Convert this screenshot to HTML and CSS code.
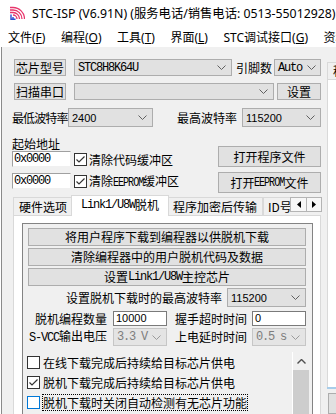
FILE: index.html
```html
<!DOCTYPE html>
<html lang="zh-CN">
<head>
  <meta charset="UTF-8" />
  <meta name="viewport" content="width=device-width, initial-scale=1.0" />
  <title>STC-ISP</title>
  <link rel="stylesheet" href="styles.css">
</head>
<body>
  <div class="window">
    <div class="titlebar">
      <svg class="app-icon" viewBox="0 0 15 14">
        <g class="icon-red">
          <path d="M0 1.5H3A11.5 11.5 0 0 1 14.5 13" />
          <path d="M0 4H3A9 9 0 0 1 12 13" />
          <path d="M0 6.5H3A6.5 6.5 0 0 1 9.5 13" />
          <path d="M3 9A4 4 0 0 1 7 13" />
        </g>
        <path class="icon-blue" d="M1 8.5V13.2H5.5M3 11V13" />
      </svg>
      <span class="title">STC-ISP (V6.91N) (服务电话/销售电话: 0513-55012928)</span>
    </div>

    <div class="menubar">
      <span>文件(<u>F</u>)</span>
      <span>编程(<u>O</u>)</span>
      <span>工具(<u>T</u>)</span>
      <span>界面(<u>L</u>)</span>
      <span>STC调试接口(<u>G</u>)</span>
      <span>资料</span>
    </div>

    <div class="client">
      <div class="left-pane">
        <div class="row row-chip">
          <div class="btn btn-side">芯片型号</div>
          <div class="combo combo-chip">
            <span class="mono">STC8H8K64U</span>
            <svg class="chev" viewBox="0 0 9 5"><path d="M0.5 0.5L4.5 4.5L8.5 0.5" /></svg>
          </div>
          <span class="lbl lbl-pins">引脚数</span>
          <div class="combo combo-pins">
            <span class="mono">Auto</span>
            <svg class="chev" viewBox="0 0 9 5"><path d="M0.5 0.5L4.5 4.5L8.5 0.5" /></svg>
          </div>
        </div>

        <div class="row row-port">
          <div class="btn btn-side">扫描串口</div>
          <div class="combo combo-port">
            <span></span>
            <svg class="chev" viewBox="0 0 9 5"><path d="M0.5 0.5L4.5 4.5L8.5 0.5" /></svg>
          </div>
          <div class="btn btn-setup">设置</div>
        </div>

        <div class="row row-baud">
          <span class="lbl lbl-minbaud">最低波特率</span>
          <div class="combo combo-minbaud">
            <span class="num">2400</span>
            <svg class="chev" viewBox="0 0 9 5"><path d="M0.5 0.5L4.5 4.5L8.5 0.5" /></svg>
          </div>
          <span class="lbl lbl-maxbaud">最高波特率</span>
          <div class="combo combo-maxbaud">
            <span class="num">115200</span>
            <svg class="chev" viewBox="0 0 9 5"><path d="M0.5 0.5L4.5 4.5L8.5 0.5" /></svg>
          </div>
        </div>

        <div class="addr-block">
          <div class="addr-left">
            <div class="addr-title">起始地址</div>
            <div class="addr-row">
              <div class="edit edit-addr"><span class="mono">0x0000</span></div>
              <span class="cb"><svg viewBox="0 0 11 11"><path d="M1.5 5.5L4 8L9.5 2.5" /></svg></span>
              <span class="cb-text">清除代码缓冲区</span>
            </div>
            <div class="addr-row">
              <div class="edit edit-addr"><span class="mono">0x0000</span></div>
              <span class="cb"><svg viewBox="0 0 11 11"><path d="M1.5 5.5L4 8L9.5 2.5" /></svg></span>
              <span class="cb-text">清除<span class="mono narrow">EEPROM</span>缓冲区</span>
            </div>
          </div>
          <div class="addr-right">
            <div class="btn btn-file">打开程序文件</div>
            <div class="btn btn-file">打开<span class="mono narrow">EEPROM</span>文件</div>
          </div>
        </div>

        <div class="tab-strip">
          <div class="tab tab-hw">硬件选项</div>
          <div class="tab tab-active"><span class="mono">Link1/U8W</span>脱机</div>
          <div class="tab tab-enc">程序加密后传输</div>
          <div class="tab tab-id">ID号</div>
          <div class="tab-spin">
            <span class="spin-btn"><svg viewBox="0 0 4 7"><path d="M4 0V7L0 3.5Z" /></svg></span>
            <span class="spin-btn"><svg viewBox="0 0 4 7"><path d="M0 0V7L4 3.5Z" /></svg></span>
          </div>
        </div>

        <div class="tab-panel">
          <div class="offline-group">
            <div class="btn dl-btn">将用户程序下载到编程器以供脱机下载</div>
            <div class="btn dl-btn">清除编程器中的用户脱机代码及数据</div>
            <div class="btn dl-btn">设置<span class="mono">Link1/U8W</span>主控芯片</div>

            <div class="baud-row">
              <span class="lbl">设置脱机下载时的最高波特率</span>
              <div class="combo combo-offbaud">
                <span class="num">115200</span>
                <svg class="chev" viewBox="0 0 9 5"><path d="M0.5 0.5L4.5 4.5L8.5 0.5" /></svg>
              </div>
            </div>

            <div class="param-row row-count">
              <span class="plbl plbl-a">脱机编程数量</span>
              <div class="edit field field-a"><span class="num">10000</span></div>
              <span class="plbl plbl-b">握手超时时间</span>
              <div class="edit field"><span class="num">0</span></div>
            </div>

            <div class="param-row row-vcc">
              <span class="plbl plbl-a"><span class="mono">S-VCC</span>输出电压</span>
              <div class="combo combo-off field field-a">
                <span class="mono">3.3 V</span>
                <svg class="chev" viewBox="0 0 9 5"><path d="M0.5 0.5L4.5 4.5L8.5 0.5" /></svg>
              </div>
              <span class="plbl plbl-b">上电延时时间</span>
              <div class="combo combo-off field">
                <span class="mono">0.5 s</span>
                <svg class="chev" viewBox="0 0 9 5"><path d="M0.5 0.5L4.5 4.5L8.5 0.5" /></svg>
              </div>
            </div>

            <div class="opt-list">
              <div class="opt-items">
                <div class="opt">
                  <span class="cb"></span>
                  <span class="opt-text">在线下载完成后持续给目标芯片供电</span>
                </div>
                <div class="opt">
                  <span class="cb"><svg viewBox="0 0 11 11"><path d="M1.5 5.5L4 8L9.5 2.5" /></svg></span>
                  <span class="opt-text">脱机下载完成后持续给目标芯片供电</span>
                </div>
                <div class="opt">
                  <span class="cb cb-hover"></span>
                  <span class="opt-text opt-focus">脱机下载时关闭自动检测有无芯片功能</span>
                </div>
              </div>
              <div class="scrollbar">
                <span class="sb-up"><svg viewBox="0 0 9 5"><path d="M0.5 4.5L4.5 0.5L8.5 4.5" /></svg></span>
                <span class="sb-thumb"></span>
              </div>
            </div>
          </div>
        </div>
      </div>

      <div class="side">
        <div class="side-tab">程序</div>
        <div class="side-panel"></div>
        <div class="side-line"></div>
        <div class="side-box"></div>
      </div>
    </div>
  </div>
</body>
</html>
```

FILE: styles.css
```css
* {
  box-sizing: border-box;
}

body {
  margin: 0;
  width: 336px;
  height: 414px;
  overflow: hidden;
  background-color: #ffffff;
  color: #000000;
  font-family: "Noto Sans CJK SC", sans-serif;
  font-size: 12px;
}

.window {
  width: 336px;
  height: 414px;
  display: flex;
  flex-direction: column;
}

/* title + menu */
.titlebar {
  height: 26px;
  flex: none;
  display: flex;
  align-items: center;
  padding-left: 10px;
  white-space: nowrap;
  font-family: "Noto Sans", "Noto Sans CJK SC", sans-serif;
  font-size: 12.3px;
}

.app-icon {
  width: 15px;
  height: 14px;
  margin-right: 7px;
  flex: none;
}

.icon-red path {
  fill: none;
  stroke: #e8366c;
  stroke-width: 1.3;
}

.icon-blue {
  fill: none;
  stroke: #2d4fd0;
  stroke-width: 1.4;
}

.menubar {
  height: 21px;
  flex: none;
  display: flex;
  align-items: center;
  gap: 15.5px;
  padding-left: 8px;
  white-space: nowrap;
  font-family: "Noto Sans", "Noto Sans CJK SC", sans-serif;
  font-size: 12px;
}

.menubar u {
  text-underline-offset: 1px;
}

/* dialog client area */
.client {
  flex: 1;
  min-height: 0;
  display: flex;
  margin-left: 1px;
  border-left: 1px solid #8a8a8a;
  background-color: #f0f0f0;
  padding-top: 12px;
  overflow: hidden;
}

.left-pane {
  width: 325px;
  flex: none;
  padding-left: 10px;
}

.row {
  display: flex;
  align-items: center;
}

.lbl {
  white-space: nowrap;
  line-height: 16px;
}

.mono {
  font-family: "Liberation Mono", monospace;
  font-size: 12px;
  letter-spacing: -1.2px;
}

.mono.narrow {
  display: inline-block;
  transform: scaleX(0.84);
  transform-origin: left center;
  margin-right: -6px;
}

.num {
  font-family: "Liberation Sans", sans-serif;
  font-size: 11px;
}

.btn {
  display: flex;
  align-items: center;
  justify-content: center;
  background-color: #e1e1e1;
  border: 1px solid #adadad;
  white-space: nowrap;
  line-height: 14px;
}

.combo {
  display: flex;
  align-items: center;
  justify-content: space-between;
  background-color: #e1e1e1;
  border: 1px solid #adadad;
  padding: 0 5px 0 3px;
  white-space: nowrap;
  line-height: 14px;
}

.chev {
  width: 9px;
  height: 5px;
  flex: none;
  fill: none;
  stroke: #606060;
  stroke-width: 1;
}

.edit {
  display: flex;
  align-items: center;
  background-color: #ffffff;
  border: 1px solid #7a7a7a;
  padding-left: 2px;
  line-height: 13px;
}

.cb {
  width: 13px;
  height: 13px;
  flex: none;
  display: flex;
  align-items: center;
  justify-content: center;
  background-color: #ffffff;
  border: 1px solid #333333;
}

.cb svg {
  width: 11px;
  height: 11px;
  fill: none;
  stroke: #333333;
  stroke-width: 1.2;
}

.cb-hover {
  border-color: #0078d7;
}

/* top rows */
.row-chip {
  height: 17px;
}

.btn-side {
  width: 52px;
  height: 17px;
  margin-left: 2px;
}

.combo-chip {
  width: 158px;
  height: 17px;
  margin-left: 8px;
}

.lbl-pins {
  width: 38px;
  margin-left: 4px;
}

.combo-pins {
  width: 47px;
  height: 17px;
  padding-right: 4px;
}

.row-port {
  height: 17px;
  margin-top: 7px;
}

.combo-port {
  width: 200px;
  height: 17px;
  margin-left: 8px;
}

.btn-setup {
  width: 44px;
  height: 17px;
  margin-left: 3px;
}

.row-baud {
  height: 19px;
  margin-top: 8px;
}

.lbl-minbaud {
  width: 56px;
  letter-spacing: -0.9px;
}

.combo-minbaud {
  width: 85px;
  height: 19px;
}

.lbl-maxbaud {
  width: 65px;
  margin-left: 24px;
}

.combo-maxbaud {
  width: 79px;
  height: 19px;
}

/* start address block */
.addr-block {
  display: flex;
  margin-top: 9px;
}

.addr-left {
  width: 206px;
}

.addr-title {
  height: 15px;
  line-height: 15px;
}

.addr-row {
  display: flex;
  align-items: center;
  height: 16px;
}

.addr-row + .addr-row {
  margin-top: 6px;
}

.edit-addr {
  width: 59px;
  height: 16px;
  padding-left: 1px;
  border-color: #a0a0a0 #f0f0f0 #f0f0f0 #a0a0a0;
}

.addr-row .cb {
  margin-left: 3px;
}

.cb-text {
  margin-left: 2px;
  white-space: nowrap;
}

.addr-right {
  padding-top: 10px;
}

.btn-file {
  width: 103px;
  height: 21px;
}

.btn-file + .btn-file {
  margin-top: 5px;
}

/* tabs */
.tab-strip {
  position: relative;
  z-index: 1;
  display: flex;
  align-items: flex-end;
  height: 21px;
  margin: 2px 0 -1px 1px;
  width: 309px;
  overflow: hidden;
}

.tab {
  height: 18px;
  margin-bottom: 1px;
  display: flex;
  align-items: center;
  justify-content: center;
  background-color: #f0f0f0;
  border: 1px solid #d9d9d9;
  border-bottom: none;
  white-space: nowrap;
  line-height: 14px;
  flex: none;
}

.tab-hw {
  width: 60px;
}

.tab-active {
  position: relative;
  z-index: 2;
  width: 98px;
  height: 21px;
  margin: 0 -2px;
  background-color: #ffffff;
  padding-bottom: 2px;
}

.tab-enc {
  width: 96px;
}

.tab-id {
  width: 60px;
  justify-content: flex-start;
  padding-left: 4px;
}

.tab-spin {
  position: absolute;
  right: 0;
  top: 2px;
  z-index: 3;
  display: flex;
  height: 15px;
  border: 1px solid #b4b4b4;
  background-color: #f7f7f7;
}

.spin-btn {
  width: 15px;
  display: flex;
  align-items: center;
  justify-content: center;
}

.spin-btn + .spin-btn {
  border-left: 1px solid #b4b4b4;
}

.spin-btn svg {
  width: 4px;
  height: 7px;
  fill: #000000;
}

.tab-panel {
  width: 308px;
  height: 220px;
  margin-left: 1px;
  padding: 7px 7px 0 8px;
  background-color: #ffffff;
  border: 1px solid #d9d9d9;
}

/* offline group */
.offline-group {
  height: 205px;
  padding: 4px 6px 0 5px;
  background-color: #f0f0f0;
  border: 1px solid #838383;
}

.dl-btn {
  height: 18px;
  margin-bottom: 2px;
}

.baud-row {
  display: flex;
  align-items: center;
  justify-content: flex-end;
  height: 19px;
  margin-top: 1px;
}

.combo-offbaud {
  width: 79px;
  height: 19px;
  margin-left: 5px;
}

.param-row {
  display: flex;
  align-items: center;
}

.plbl {
  text-align: right;
  white-space: nowrap;
  line-height: 16px;
}

.plbl-a {
  width: 79px;
}

.plbl-b {
  width: 72px;
  margin-left: 8px;
  margin-right: 5px;
}

.field {
  width: 54px;
  height: 100%;
}

.field-a {
  margin-left: 6px;
}

.row-count {
  height: 15px;
  margin-top: 4px;
}

.row-vcc {
  height: 18px;
  margin-top: 2px;
}

.combo-off {
  background-color: #e4e4e4;
  border-color: #c6c6c6;
  color: #7d7d7d;
}

.combo-off .chev {
  stroke: #9a9a9a;
}

.opt-list {
  display: flex;
  height: 70px;
  margin: 6px -3px 0 -1px;
}

.opt-items {
  flex: 1;
  padding-top: 0;
}

.opt {
  display: flex;
  align-items: center;
  height: 20px;
}

.opt-text {
  margin-left: 3px;
  white-space: nowrap;
  line-height: 15px;
}

.opt-focus {
  outline: 1px dotted #000000;
  outline-offset: 0;
}

.scrollbar {
  width: 17px;
  display: flex;
  flex-direction: column;
  border-left: 1px solid #ffffff;
  background-color: #f0f0f0;
}

.sb-up {
  height: 18px;
  display: flex;
  align-items: center;
  justify-content: center;
}

.sb-up svg {
  width: 9px;
  height: 5px;
  fill: none;
  stroke: #505050;
  stroke-width: 1.4;
}

.sb-thumb {
  flex: 1;
  background-color: #cdcdcd;
}

/* right pane, cut off by the window edge */
.side {
  flex: 1;
  display: flex;
  flex-direction: column;
  padding-top: 3px;
}

.side-tab {
  height: 18px;
  padding-left: 5px;
  line-height: 16px;
  white-space: nowrap;
  background-color: #f0f0f0;
  border: 1px solid #d9d9d9;
  border-right: none;
}

.side-panel {
  height: 317px;
  background-color: #ffffff;
  border-left: 1px solid #d9d9d9;
}

.side-line {
  height: 2px;
  background-color: #a8cdea;
}

.side-box {
  height: 22px;
  margin-top: 4px;
  margin-left: 1px;
  background-color: #e1e1e1;
  border: 1px solid #adadad;
  border-right: none;
}
```
